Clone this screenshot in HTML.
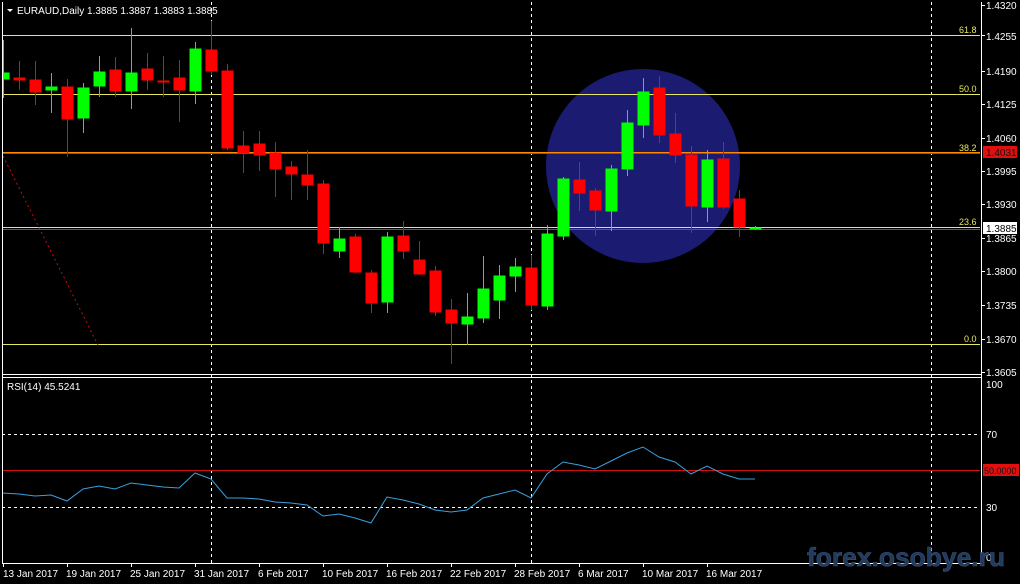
<!DOCTYPE html>
<html><head><meta charset="utf-8"><style>
html,body{margin:0;padding:0;background:#000;width:1020px;height:584px;overflow:hidden}
svg{display:block}
text{font-family:"Liberation Sans",sans-serif;font-size:10px;fill:#fff}
</style></head><body>
<svg width="1020" height="584" viewBox="0 0 1020 584" xmlns="http://www.w3.org/2000/svg">
<rect width="1020" height="584" fill="#000"/>
<circle cx="643" cy="166" r="97" fill="#1b1b72"/>
<g stroke="#fff" stroke-dasharray="3,3" stroke-width="1">
<line x1="211.5" y1="2" x2="211.5" y2="563"/>
<line x1="531.5" y1="2" x2="531.5" y2="563"/>
<line x1="931.5" y1="2" x2="931.5" y2="563"/>
<line x1="2" y1="434.5" x2="980" y2="434.5"/>
<line x1="2" y1="507.5" x2="980" y2="507.5"/>
</g>
<g stroke="#e8e860" stroke-width="1">
<line x1="2" y1="35.5" x2="980" y2="35.5"/>
<line x1="2" y1="94.5" x2="980" y2="94.5"/>
<line x1="2" y1="227.5" x2="980" y2="227.5"/>
<line x1="2" y1="344.5" x2="980" y2="344.5"/>
</g>
<line x1="2" y1="229.5" x2="980" y2="229.5" stroke="#5a5a5a"/>
<line x1="2" y1="152.5" x2="980" y2="152.5" stroke="#ff8800"/>
<line x1="2" y1="153.5" x2="980" y2="153.5" stroke="#e03010"/>
<line x1="3" y1="156" x2="98" y2="345" stroke="#c01010" stroke-dasharray="2,3"/>
<g>
<text x="959" y="33" style="fill:#e8e860;font-size:9px">61.8</text>
<text x="959" y="92" style="fill:#e8e860;font-size:9px">50.0</text>
<text x="959" y="151" style="fill:#e8e860;font-size:9px">38.2</text>
<text x="959" y="225" style="fill:#e8e860;font-size:9px">23.6</text>
<text x="964" y="342" style="fill:#e8e860;font-size:9px">0.0</text>
</g>
<g stroke-width="1">
<g stroke="#00ff00" fill="#00ff00">
<line x1="3.5" y1="40" x2="3.5" y2="98"/><rect x="3" y="73" width="6" height="6"/>
<line x1="51.5" y1="73" x2="51.5" y2="113"/><rect x="46" y="87" width="11" height="3"/>
<line x1="83.5" y1="83" x2="83.5" y2="133"/><rect x="78" y="88" width="11" height="30"/>
<line x1="99.5" y1="56" x2="99.5" y2="97"/><rect x="94" y="72" width="11" height="14"/>
<line x1="131.5" y1="28" x2="131.5" y2="109"/><rect x="126" y="73" width="11" height="18"/>
<line x1="195.5" y1="42" x2="195.5" y2="104"/><rect x="190" y="49" width="11" height="42"/>
<line x1="339.5" y1="227" x2="339.5" y2="258"/><rect x="334" y="239" width="11" height="12"/>
<line x1="387.5" y1="232" x2="387.5" y2="313"/><rect x="382" y="237" width="11" height="65"/>
<line x1="467.5" y1="293" x2="467.5" y2="345"/><rect x="462" y="317" width="11" height="7"/>
<line x1="483.5" y1="256" x2="483.5" y2="323"/><rect x="478" y="289" width="11" height="29"/>
<line x1="499.5" y1="265" x2="499.5" y2="319"/><rect x="494" y="276" width="11" height="24"/>
<line x1="515.5" y1="258" x2="515.5" y2="292"/><rect x="510" y="267" width="11" height="9"/>
<line x1="547.5" y1="225" x2="547.5" y2="310"/><rect x="542" y="234" width="11" height="72"/>
<line x1="563.5" y1="177" x2="563.5" y2="240"/><rect x="558" y="179" width="11" height="57"/>
<line x1="611.5" y1="165" x2="611.5" y2="231"/><rect x="606" y="169" width="11" height="42"/>
<line x1="627.5" y1="110" x2="627.5" y2="176"/><rect x="622" y="123" width="11" height="46"/>
<line x1="643.5" y1="78" x2="643.5" y2="138"/><rect x="638" y="92" width="11" height="33"/>
<line x1="707.5" y1="150" x2="707.5" y2="222"/><rect x="702" y="160" width="11" height="47"/>
<line x1="755.5" y1="226" x2="755.5" y2="230"/><rect x="750" y="228" width="11" height="1"/>
</g>
<g stroke="#ff0000" fill="#ff0000">
<line x1="19.5" y1="61" x2="19.5" y2="90"/><rect x="14" y="78" width="11" height="2"/>
<line x1="35.5" y1="61" x2="35.5" y2="105"/><rect x="30" y="80" width="11" height="12"/>
<line x1="67.5" y1="79" x2="67.5" y2="157"/><rect x="62" y="87" width="11" height="32"/>
<line x1="115.5" y1="57" x2="115.5" y2="97"/><rect x="110" y="70" width="11" height="21"/>
<line x1="147.5" y1="53" x2="147.5" y2="90"/><rect x="142" y="69" width="11" height="11"/>
<line x1="163.5" y1="56" x2="163.5" y2="97"/><rect x="158" y="81" width="11" height="1"/>
<line x1="179.5" y1="60" x2="179.5" y2="122"/><rect x="174" y="78" width="11" height="12"/>
<line x1="211.5" y1="21" x2="211.5" y2="75"/><rect x="206" y="50" width="11" height="21"/>
<line x1="227.5" y1="64" x2="227.5" y2="150"/><rect x="222" y="71" width="11" height="77"/>
<line x1="243.5" y1="131" x2="243.5" y2="173"/><rect x="238" y="146" width="11" height="7"/>
<line x1="259.5" y1="131" x2="259.5" y2="171"/><rect x="254" y="144" width="11" height="11"/>
<line x1="275.5" y1="142" x2="275.5" y2="197"/><rect x="270" y="153" width="11" height="16"/>
<line x1="291.5" y1="161" x2="291.5" y2="200"/><rect x="286" y="167" width="11" height="7"/>
<line x1="307.5" y1="150" x2="307.5" y2="200"/><rect x="302" y="175" width="11" height="10"/>
<line x1="323.5" y1="180" x2="323.5" y2="254"/><rect x="318" y="184" width="11" height="59"/>
<line x1="355.5" y1="234" x2="355.5" y2="273"/><rect x="350" y="237" width="11" height="35"/>
<line x1="371.5" y1="270" x2="371.5" y2="313"/><rect x="366" y="273" width="11" height="30"/>
<line x1="403.5" y1="221" x2="403.5" y2="259"/><rect x="398" y="236" width="11" height="15"/>
<line x1="419.5" y1="241" x2="419.5" y2="275"/><rect x="414" y="260" width="11" height="14"/>
<line x1="435.5" y1="266" x2="435.5" y2="316"/><rect x="430" y="271" width="11" height="41"/>
<line x1="451.5" y1="299" x2="451.5" y2="364"/><rect x="446" y="310" width="11" height="13"/>
<line x1="531.5" y1="255" x2="531.5" y2="310"/><rect x="526" y="268" width="11" height="37"/>
<line x1="579.5" y1="162" x2="579.5" y2="211"/><rect x="574" y="180" width="11" height="13"/>
<line x1="595.5" y1="188" x2="595.5" y2="236"/><rect x="590" y="191" width="11" height="19"/>
<line x1="659.5" y1="76" x2="659.5" y2="143"/><rect x="654" y="88" width="11" height="47"/>
<line x1="675.5" y1="113" x2="675.5" y2="163"/><rect x="670" y="134" width="11" height="21"/>
<line x1="691.5" y1="146" x2="691.5" y2="233"/><rect x="686" y="155" width="11" height="51"/>
<line x1="723.5" y1="142" x2="723.5" y2="209"/><rect x="718" y="159" width="11" height="48"/>
<line x1="739.5" y1="190" x2="739.5" y2="237"/><rect x="734" y="199" width="11" height="28"/>
</g>
</g>
<line x1="2" y1="470.5" x2="980" y2="470.5" stroke="#d01010"/>
<polyline fill="none" stroke="#3aa0e0" stroke-width="1" points="2,493 19,494 35,496 51,495 67,501 83,489 99,486 115,489 131,483 147,485 163,487 179,488 195,473 211,479 227,498 243,498 259,499 275,502 291,503 307,505 323,516 339,514 355,518 371,523 387,497 403,500 419,504 435,510 451,512 467,510 483,498 499,494 515,490 531,498 547,474 563,462 579,465 595,469 611,461 627,453 643,447 659,457 675,462 691,474 707,466 723,474 739,479 755,479"/>
<g stroke="#fff" fill="none">
<line x1="2.5" y1="2" x2="2.5" y2="563"/>
<line x1="981.5" y1="2" x2="981.5" y2="563"/>
<line x1="2" y1="374.5" x2="982" y2="374.5"/>
<line x1="2" y1="377.5" x2="982" y2="377.5"/>
<line x1="2" y1="563.5" x2="982" y2="563.5"/>
</g>
<g stroke="#fff">
<line x1="981" y1="5.5" x2="985" y2="5.5"/><line x1="981" y1="35.5" x2="985" y2="35.5"/>
<line x1="981" y1="71.5" x2="985" y2="71.5"/><line x1="981" y1="104.5" x2="985" y2="104.5"/>
<line x1="981" y1="138.5" x2="985" y2="138.5"/><line x1="981" y1="171.5" x2="985" y2="171.5"/>
<line x1="981" y1="204.5" x2="985" y2="204.5"/><line x1="981" y1="238.5" x2="985" y2="238.5"/>
<line x1="981" y1="271.5" x2="985" y2="271.5"/><line x1="981" y1="305.5" x2="985" y2="305.5"/>
<line x1="981" y1="339.5" x2="985" y2="339.5"/><line x1="981" y1="372.5" x2="985" y2="372.5"/>
</g>
<g>
<text x="986" y="9">1.4320</text><text x="986" y="40">1.4255</text>
<text x="986" y="75">1.4190</text><text x="986" y="108">1.4125</text>
<text x="986" y="142">1.4060</text><text x="986" y="175">1.3995</text>
<text x="986" y="208">1.3930</text><text x="986" y="242">1.3865</text>
<text x="986" y="275">1.3800</text><text x="986" y="309">1.3735</text>
<text x="986" y="343">1.3670</text><text x="986" y="376">1.3605</text>
<rect x="983" y="146" width="34" height="12" fill="#e01010"/>
<text x="986" y="156" style="fill:#111">1.4031</text>
<rect x="983" y="222" width="34" height="12" fill="#fff"/>
<text x="986" y="232" style="fill:#000">1.3885</text>
<text x="986" y="388">100</text><text x="986" y="438">70</text>
<rect x="983" y="464" width="36" height="12" fill="#e01010"/>
<text x="984" y="474" style="fill:#111;font-size:9px">50.0000</text>
<text x="986" y="511">30</text><text x="986" y="561">0</text>
</g>
<polygon points="7,9 13,9 10,12" fill="#fff"/>
<text x="17" y="14">EURAUD,Daily  1.3885 1.3887 1.3883 1.3885</text>
<text x="7" y="390">RSI(14) 45.5241</text>
<g stroke="#fff">
<line x1="3.5" y1="563" x2="3.5" y2="567"/><line x1="67.5" y1="563" x2="67.5" y2="567"/>
<line x1="131.5" y1="563" x2="131.5" y2="567"/><line x1="195.5" y1="563" x2="195.5" y2="567"/>
<line x1="259.5" y1="563" x2="259.5" y2="567"/><line x1="323.5" y1="563" x2="323.5" y2="567"/>
<line x1="387.5" y1="563" x2="387.5" y2="567"/><line x1="451.5" y1="563" x2="451.5" y2="567"/>
<line x1="515.5" y1="563" x2="515.5" y2="567"/><line x1="579.5" y1="563" x2="579.5" y2="567"/>
<line x1="643.5" y1="563" x2="643.5" y2="567"/><line x1="707.5" y1="563" x2="707.5" y2="567"/>
</g>
<g>
<text x="3" y="577">13 Jan 2017</text><text x="66" y="577">19 Jan 2017</text>
<text x="130" y="577">25 Jan 2017</text><text x="194" y="577">31 Jan 2017</text>
<text x="258" y="577">6 Feb 2017</text><text x="322" y="577">10 Feb 2017</text>
<text x="386" y="577">16 Feb 2017</text><text x="450" y="577">22 Feb 2017</text>
<text x="514" y="577">28 Feb 2017</text><text x="578" y="577">6 Mar 2017</text>
<text x="642" y="577">10 Mar 2017</text><text x="706" y="577">16 Mar 2017</text>
</g>
<text x="807" y="566" textLength="198" lengthAdjust="spacingAndGlyphs" style="font-size:26px;font-weight:bold;fill:#223a5c;stroke:#3a5278;stroke-width:0.6">forex.osobye.ru</text>
</svg>
</body></html>
